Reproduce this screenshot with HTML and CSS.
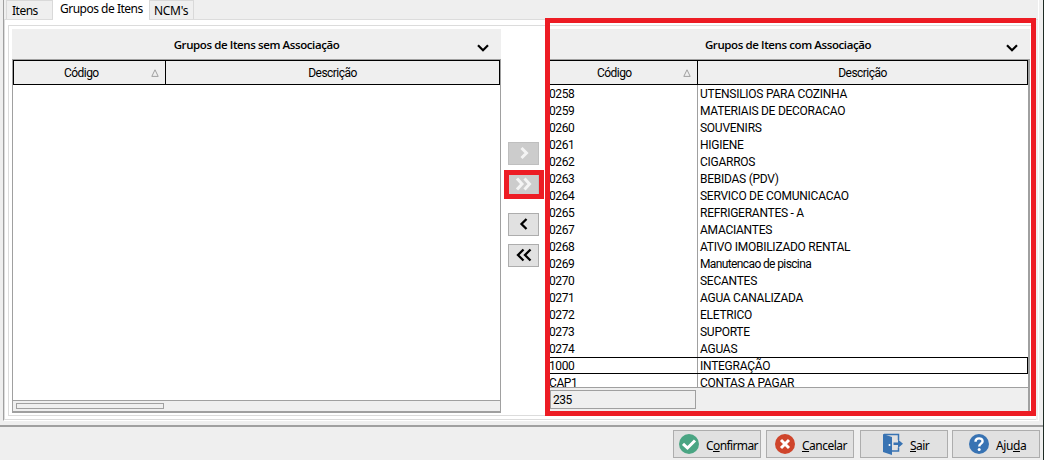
FILE: index.html
```html
<!DOCTYPE html>
<html lang="pt-BR">
<head>
    <meta charset="UTF-8">
    <meta name="viewport" content="width=device-width, initial-scale=1.0">
    <title>Grupos de Itens</title>
    <link rel="stylesheet" href="styles.css">
</head>
<body>
    <div class="window">
        <div class="main">
            <div class="tabs">
                <div class="tab tab-itens">Itens</div>
                <div class="tab active">Grupos de Itens</div>
                <div class="tab tab-ncm">NCM's</div>
            </div>
            <div class="page">
                <div class="frame">
                    <div class="panel panel-left">
                        <div class="title">
                            <span>Grupos de Itens sem Associação</span>
                            <svg class="chevron" width="12" height="8" viewBox="0 0 12 8"><path d="M1 1.2l5 5 5-5"/></svg>
                        </div>
                        <div class="grid">
                            <div class="head">
                                <div class="col-code"><span>Código</span><svg width="8" height="8" viewBox="0 0 8 8"><path d="M4 .8L7.2 7.4H.8z"/></svg></div>
                                <div class="col-desc">Descrição</div>
                            </div>
                            <div class="rows"></div>
                            <div class="scroll"><div class="thumb"></div></div>
                        </div>
                    </div>

                    <div class="moves">
                        <button class="move" disabled><svg width="10" height="14" viewBox="0 0 10 14"><path d="M2.500 2l5 5-5 5"/></svg></button>
                        <button class="move marked" disabled><svg width="18" height="14" viewBox="0 0 18 14"><path d="M2 1.500l5 5.500-5 5.500M9.500 1.500l5 5.500-5 5.500"/></svg></button>
                        <button class="move back"><svg width="10" height="14" viewBox="0 0 10 14"><path d="M7.500 2L2.500 7l5 5"/></svg></button>
                        <button class="move"><svg width="18" height="14" viewBox="0 0 18 14"><path d="M8.500 1.500L3 7l5.500 5.500M15.500 1.500L10 7l5.500 5.500"/></svg></button>
                    </div>

                    <div class="panel panel-right">
                        <div class="title">
                            <span>Grupos de Itens com Associação</span>
                            <svg class="chevron" width="12" height="8" viewBox="0 0 12 8"><path d="M1 1.2l5 5 5-5"/></svg>
                        </div>
                        <div class="grid">
                            <div class="head">
                                <div class="col-code"><span>Código</span><svg width="8" height="8" viewBox="0 0 8 8"><path d="M4 .8L7.2 7.4H.8z"/></svg></div>
                                <div class="col-desc">Descrição</div>
                            </div>
                            <div class="rows">
                                <div class="row"><span>0258</span><span>UTENSILIOS PARA COZINHA</span></div>
                                <div class="row"><span>0259</span><span>MATERIAIS DE DECORACAO</span></div>
                                <div class="row"><span>0260</span><span>SOUVENIRS</span></div>
                                <div class="row"><span>0261</span><span>HIGIENE</span></div>
                                <div class="row"><span>0262</span><span>CIGARROS</span></div>
                                <div class="row"><span>0263</span><span>BEBIDAS (PDV)</span></div>
                                <div class="row"><span>0264</span><span>SERVICO DE COMUNICACAO</span></div>
                                <div class="row"><span>0265</span><span>REFRIGERANTES - A</span></div>
                                <div class="row"><span>0267</span><span>AMACIANTES</span></div>
                                <div class="row"><span>0268</span><span>ATIVO IMOBILIZADO RENTAL</span></div>
                                <div class="row"><span>0269</span><span class="lower">Manutencao de piscina</span></div>
                                <div class="row"><span>0270</span><span>SECANTES</span></div>
                                <div class="row"><span>0271</span><span>AGUA CANALIZADA</span></div>
                                <div class="row"><span>0272</span><span>ELETRICO</span></div>
                                <div class="row"><span>0273</span><span>SUPORTE</span></div>
                                <div class="row"><span>0274</span><span>AGUAS</span></div>
                                <div class="row selected"><span>1000</span><span>INTEGRAÇÃO</span></div>
                                <div class="row"><span>CAP1</span><span>CONTAS A PAGAR</span></div>
                            </div>
                            <div class="total"><div class="count">235</div></div>
                        </div>
                    </div>
                </div>
            </div>
        </div>

        <div class="actions">
            <button class="action">
                <svg width="20" height="20" viewBox="0 0 20 20"><circle cx="10" cy="10" r="10" fill="#4aa583"/><path d="M4 9.800l4.500 4.200 7.500-7.500" fill="none" stroke="#fff" stroke-width="3"/></svg>
                <span>C<u>o</u>nfirmar</span>
            </button>
            <button class="action cancel">
                <svg width="20" height="20" viewBox="0 0 20 20"><circle cx="10" cy="10" r="10" fill="#cf452c"/><path d="M6 6l8 8M14 6l-8 8" fill="none" stroke="#fff" stroke-width="3"/></svg>
                <span><u>C</u>ancelar</span>
            </button>
            <button class="action exit">
                <svg width="20" height="22" viewBox="0 0 20 22"><path d="M0 1l9 3v18l-9-3z" fill="#3873b3"/><path d="M1 1.500h14.500V7M15.500 14.500v3.500H9" fill="none" stroke="#3873b3" stroke-width="1.500"/><path d="M10.500 9.500H15V6.500l5 4.300-5 4.300V12h-4.500z" fill="#3873b3"/><circle cx="6.500" cy="12" r="1" fill="#fff"/></svg>
                <span><u>S</u>air</span>
            </button>
            <button class="action help">
                <svg width="20" height="20" viewBox="0 0 20 20"><circle cx="10" cy="10" r="10" fill="#3873b3"/><path d="M6.500 7.700C6.500 3.200 13.600 3.400 13.600 7.300c0 2.400-3.400 2.300-3.400 5.200" fill="none" stroke="#fff" stroke-width="2.400"/><circle cx="10.200" cy="15.400" r="1.500" fill="#fff"/></svg>
                <span>Aju<u>d</u>a</span>
            </button>
        </div>

        <div class="highlight highlight-panel"></div>
        <div class="highlight highlight-button"></div>
    </div>
</body>
</html>
```

FILE: styles.css
```css
* {
    box-sizing: border-box;
}

body {
    margin: 0;
    background-color: #efefef;
    font-family: "Noto Sans", "Open Sans", sans-serif;
    font-size: 12px;
    color: #000;
}

.window {
    position: relative;
    width: 1044px;
    height: 460px;
    border-right: 1px solid #1e2c25;
    overflow: hidden;
}

.main {
    width: 1036px;
    height: 421px;
    margin-left: 3px;
    border-left: 1px solid #a0a0a0;
    border-right: 1px solid #fff;
    border-bottom: 1px solid #fff;
}

/* tabs */
.tabs {
    display: flex;
    align-items: flex-end;
    height: 20px;
    padding-left: 2px;
    border-bottom: 1px solid #dcdcdc;
    letter-spacing: -.5px;
}

.tab {
    height: 19px;
    padding-left: 5px;
    border: 1px solid #d9d9d9;
    border-bottom: none;
    line-height: 19px;
    white-space: nowrap;
}

.tab-itens {
    width: 47px;
}

.tab.active {
    width: 96px;
    height: 21px;
    margin-bottom: -1px;
    padding-left: 7px;
    border: none;
    background-color: #fff;
    line-height: 20px;
}

.tab-ncm {
    width: 45px;
    padding-left: 4px;
    letter-spacing: -.3px;
}

.page {
    width: 1032px;
    height: 400px;
    padding: 5px 1px 0 3px;
    border-left: 1px solid #dcdcdc;
    border-bottom: 1px solid #dcdcdc;
    background-color: #fff;
}

.frame {
    display: flex;
    height: 391px;
    padding: 3px 4px 0 3px;
    border: 1px solid #dcdcdc;
}

/* panels */
.panel {
    flex: none;
}

.panel-left {
    width: 489px;
}

.panel-right {
    width: 484px;
}

.title {
    position: relative;
    height: 30px;
    background-color: #efefef;
    font-family: "Open Sans", sans-serif;
    font-weight: 600;
    font-size: 11.5px;
    line-height: 31px;
    letter-spacing: -.4px;
    text-align: center;
}

.chevron {
    position: absolute;
    right: 12px;
    top: 15px;
    fill: none;
    stroke: #000;
    stroke-width: 2.2;
}

.grid {
    display: flex;
    flex-direction: column;
    height: 354px;
    border: 1px solid #a0a0a0;
    border-bottom-width: 2px;
    font-family: Roboto, sans-serif;
}

.panel-right .grid {
    border-right-width: 2px;
}

.head {
    display: flex;
    flex: none;
    height: 25px;
    border: 1px solid #000;
    background-color: #efefef;
    line-height: 24px;
    letter-spacing: -.55px;
}

.col-code {
    display: flex;
    align-items: center;
    justify-content: space-between;
    width: 152px;
    padding: 0 6px 0 50px;
    border-right: 1px solid #000;
}

.panel-right .col-code {
    width: 150px;
    padding-left: 49px;
}

.col-code svg {
    fill: none;
    stroke: #a0a0a0;
}

.col-desc {
    flex: 1;
    text-align: center;
}

.rows {
    flex: 1;
    min-height: 0;
    overflow: hidden;
    background-color: #fff;
}

.row {
    display: grid;
    grid-template-columns: 151px 1fr;
    height: 17px;
    line-height: 19px;
    letter-spacing: -.26px;
    white-space: nowrap;
}

.row span {
    height: 17px;
}

.row span:first-child {
    padding-left: 2px;
    border-right: 1px solid #a0a0a0;
    letter-spacing: -.4px;
}

.row span:last-child {
    padding-left: 2px;
}

.row .lower {
    letter-spacing: -.62px;
}

.row.selected {
    grid-template-columns: 150px 1fr;
    border: 1px solid #000;
    line-height: 17px;
}

.row.selected span {
    height: 15px;
}

.row.selected span:first-child {
    padding-left: 1px;
}

.scroll {
    height: 11px;
    padding: 2px 3px;
    border-top: 1px solid #a0a0a0;
    background-color: #efefef;
}

.thumb {
    width: 148px;
    height: 6px;
    border: 1px solid #a0a0a0;
}

.total {
    height: 24px;
    padding: 2px 3px;
    border-top: 1px solid #a0a0a0;
    background-color: #efefef;
}

.count {
    width: 146px;
    height: 19px;
    padding-left: 2px;
    border: 1px solid #a0a0a0;
    line-height: 19px;
    letter-spacing: -.5px;
}

/* move buttons */
.moves {
    display: flex;
    flex: none;
    flex-direction: column;
    align-items: center;
    width: 45px;
    padding-top: 113px;
}

.move {
    display: flex;
    align-items: center;
    justify-content: center;
    flex: none;
    width: 31px;
    height: 23px;
    margin-bottom: 8px;
    padding: 0 0 2px;
    border: 1px solid #adadad;
    background-color: #e1e1e1;
}

.move:disabled {
    border-color: #bfbfbf;
    background-color: #ccc;
}

.move.back {
    margin-top: 9px;
}

.move svg {
    flex: none;
    fill: none;
    stroke: #000;
    stroke-width: 2.3;
}

.move:disabled svg {
    stroke: #f4f4f4;
    stroke-width: 3;
}

/* bottom buttons */
.actions {
    display: flex;
    justify-content: flex-end;
    gap: 5px;
    height: 35px;
    margin-top: 4px;
    padding: 3px 3px 0 0;
    border-top: 2px solid #a0a0a0;
}

.action {
    display: flex;
    align-items: center;
    gap: 7px;
    width: 88px;
    height: 28px;
    padding: 0 0 0 5px;
    border: 1px solid #adadad;
    background-color: #e1e1e1;
    font: 12px "Noto Sans", "Open Sans", sans-serif;
    letter-spacing: -.6px;
    color: #000;
}

.action svg {
    flex: none;
}

.action span {
    padding-top: 2px;
    white-space: nowrap;
}

.action.cancel {
    padding-left: 8px;
    letter-spacing: -.5px;
}

.action.exit {
    margin: 0 -1px 0 1px;
    padding-left: 22px;
}

.action.help {
    padding-left: 16px;
    letter-spacing: -.4px;
}

/* red markers */
.highlight {
    position: absolute;
    border: 5px solid #ed1c24;
}

.highlight-panel {
    left: 545px;
    top: 18px;
    width: 491px;
    height: 398px;
}

.highlight-button {
    left: 504px;
    top: 170px;
    width: 40px;
    height: 29px;
}
```
